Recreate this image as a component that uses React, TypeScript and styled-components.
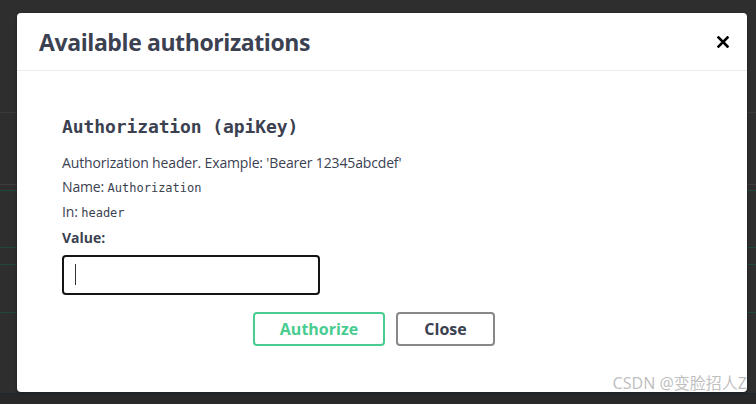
import styled, { createGlobalStyle } from "styled-components";

const Global = createGlobalStyle`
    html, body {
        margin: 0;
        padding: 0;
        height: 100%;
    }
    body {
        background-color: #2e2e2e;
        background-image: linear-gradient(
            to bottom,
            transparent 112px, #3a3a3a 112px, #3a3a3a 113px,
            transparent 113px, transparent 184px, #3c3c3c 184px, #3c3c3c 185px,
            transparent 185px, transparent 190px, #1f4a36 190px, #1f4a36 191px,
            transparent 191px, transparent 247px, #1f4a36 247px, #1f4a36 248px,
            transparent 248px, transparent 264px, #1f4a36 264px, #1f4a36 265px,
            transparent 265px, transparent 312px, #1f4a36 312px, #1f4a36 313px,
            transparent 313px, transparent 393px, #1c2833 393px, #1c2833 394px,
            #282828 394px
        );
        font-family: "Open Sans", "Noto Sans", sans-serif;
        color: #3b4151;
    }
`;

const Backdrop = styled.div`
    width: 756px;
    height: 404px;
    box-sizing: border-box;
    padding: 13px 9px 12px 17px;
    display: flex;
`;

const Modal = styled.div`
    position: relative;
    flex: 1;
    background: #fff;
    border-radius: 4px;
    box-shadow: 0 1px 3px rgba(0, 0, 0, 0.4);
    display: flex;
    flex-direction: column;
`;

const Header = styled.div`
    height: 58px;
    box-sizing: border-box;
    border-bottom: 1px solid #ebebeb;
    display: flex;
    align-items: center;
    justify-content: space-between;
    padding: 0 18px 0 22px;
`;

const Title = styled.h3`
    margin: 0;
    font-size: 23px;
    font-weight: 700;
    color: #3b4151;
    letter-spacing: -0.4px;
`;

const CloseX = styled.button`
    border: none;
    background: none;
    padding: 0;
    width: 12px;
    height: 12px;
    display: flex;
    cursor: pointer;
`;

const Body = styled.div`
    padding: 45px 20px 0 45px;
    display: flex;
    flex-direction: column;
`;

const SchemeTitle = styled.h4`
    margin: 0 0 14px;
    font-family: "DejaVu Sans Mono", "Liberation Mono", monospace;
    font-size: 18px;
    font-weight: 700;
    color: #3b4151;
    letter-spacing: -0.1px;
`;

const Line = styled.p`
    margin: 0;
    font-size: 14px;
    line-height: 24px;
    letter-spacing: -0.15px;
    color: #3b4151;
`;

const Code = styled.code`
    font-family: "DejaVu Sans Mono", "Liberation Mono", monospace;
    font-size: 12px;
    letter-spacing: 0;
    color: #3b4151;
`;

const Label = styled.label`
    margin-top: 1px;
    font-size: 14px;
    font-weight: 700;
    line-height: 24px;
`;

const Input = styled.input`
    margin-top: 5px;
    width: 258px;
    height: 40px;
    box-sizing: border-box;
    border: 2px solid #141414;
    border-radius: 4px;
    padding: 0 11px;
    font-size: 14px;
    outline: none;
    caret-color: #333;
`;

const Caret = styled.span`
    position: absolute;
    left: 13px;
    top: 14px;
    width: 1px;
    height: 21px;
    background: #333;
`;

const InputWrap = styled.div`
    position: relative;
    width: 258px;
`;

const Buttons = styled.div`
    display: flex;
    gap: 11px;
    padding: 17px 0 0 0;
    margin-left: 191px;
`;

const Btn = styled.button<{ $tone: "green" | "grey" }>`
    height: 34px;
    box-sizing: border-box;
    padding: 0;
    width: ${(p) => (p.$tone === "green" ? "132px" : "99px")};
    background: transparent;
    border: 2px solid ${(p) => (p.$tone === "green" ? "#49cc90" : "#888")};
    border-radius: 4px;
    font-family: "Open Sans", "Noto Sans", sans-serif;
    font-size: 16px;
    font-weight: 700;
    color: ${(p) => (p.$tone === "green" ? "#49cc90" : "#3b4151")};
    cursor: pointer;
`;

const Watermark = styled.span`
    position: absolute;
    right: 0px;
    bottom: -2px;
    font-family: "Noto Sans", "Noto Sans CJK SC", sans-serif;
    font-size: 16px;
    color: rgba(170, 170, 170, 0.75);
    white-space: nowrap;
`;

export default function App() {
    return (
        <Backdrop>
            <Global />
            <Modal>
                <Header>
                    <Title>Available authorizations</Title>
                    <CloseX aria-label="close">
                        <svg width="12" height="12" viewBox="0 0 12 12">
                            <path d="M1.5 1.5 L10.5 10.5 M10.5 1.5 L1.5 10.5" stroke="#000" strokeWidth="2.6" strokeLinecap="square" />
                        </svg>
                    </CloseX>
                </Header>
                <Body>
                    <SchemeTitle>Authorization (apiKey)</SchemeTitle>
                    <Line>Authorization header. Example: 'Bearer 12345abcdef'</Line>
                    <Line>
                        Name: <Code>Authorization</Code>
                    </Line>
                    <Line>
                        In: <Code>header</Code>
                    </Line>
                    <Label>Value:</Label>
                    <InputWrap>
                        <Input type="text" />
                        <Caret />
                    </InputWrap>
                    <Buttons>
                        <Btn $tone="green">Authorize</Btn>
                        <Btn $tone="grey">Close</Btn>
                    </Buttons>
                </Body>
                <Watermark>CSDN @变脸招人Z</Watermark>
            </Modal>
        </Backdrop>
    );
}
